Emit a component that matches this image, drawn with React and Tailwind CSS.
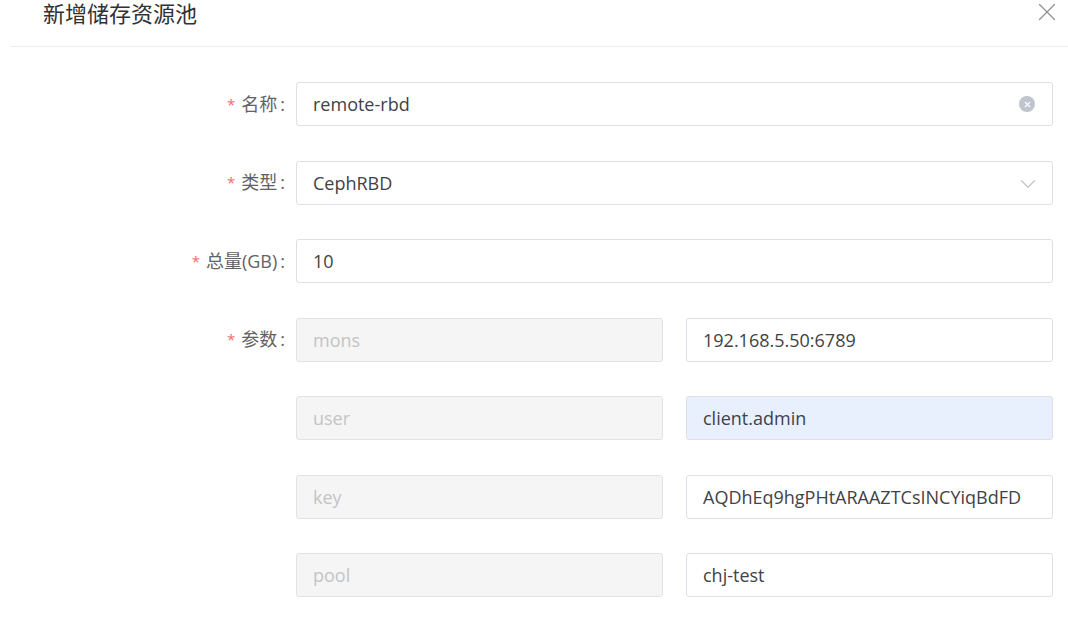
import React from 'react';
import { X, ChevronDown } from 'lucide-react';

const font = { fontFamily: '"Open Sans", "Noto Sans CJK SC", sans-serif' };

function Label({ text, required }) {
    return (
        <div className="w-[296px] shrink-0 pr-[11px] flex items-center justify-end text-[18px] text-[#606266]">
            {required && <span className="text-[#f56c6c] mr-[6px] text-[15px]">*</span>}
            <span>{text}</span>
            <span className="ml-[3px]">:</span>
        </div>
    );
}

function Field({ value, placeholder, disabled, autofill, suffix, className = '' }) {
    const tone = disabled
        ? 'bg-[#f5f5f5] border-[#e2e2e2]'
        : autofill
            ? 'bg-[#e8f0fe] border-[#dcdfe6]'
            : 'bg-white border-[#dcdfe6]';
    return (
        <div className={`relative h-[44px] border rounded-[3px] flex items-center ${tone} ${className}`}>
            <input
                readOnly
                value={value || ''}
                placeholder={placeholder}
                disabled={disabled}
                className="w-full h-full bg-transparent outline-none pl-[16px] pr-[16px] text-[18px] text-[#3f4247] placeholder:text-[#c4c4c4]"
                style={font}
            />
            {suffix}
        </div>
    );
}

const params = [
    { key: 'mons', value: '192.168.5.50:6789' },
    { key: 'user', value: 'client.admin', autofill: true },
    { key: 'key', value: 'AQDhEq9hgPHtARAAZTCsINCYiqBdFD' },
    { key: 'pool', value: 'chj-test' },
];

export default function App() {
    return (
        <div className="w-[1068px] h-[627px] bg-white overflow-hidden" style={font}>
            <div className="h-[47px] ml-[10px] border-b border-[#ebeef5] flex items-start justify-between">
                <div className="ml-[33px] mt-[1px] text-[22px] text-[#303133] leading-[24px]">新增储存资源池</div>
                <X className="-mt-[3px] mr-[6px] w-[30px] h-[30px] text-[#909399]" strokeWidth={1.1} />
            </div>

            <div className="mt-[35px] flex flex-col gap-[34.5px]">
                <div className="flex">
                    <Label text="名称" required />
                    <Field
                        value="remote-rbd"
                        className="w-[757px]"
                        suffix={
                            <span className="absolute right-[17px] top-[13px] w-[16px] h-[16px] rounded-full bg-[#c0c4cc] flex items-center justify-center">
                                <X className="w-[9px] h-[9px] text-white" strokeWidth={3} />
                            </span>
                        }
                    />
                </div>
                <div className="flex">
                    <Label text="类型" required />
                    <Field
                        value="CephRBD"
                        className="w-[757px]"
                        suffix={
                            <ChevronDown className="absolute right-[11px] top-[9px] w-[26px] h-[26px] text-[#c0c4cc]" strokeWidth={1.1} />
                        }
                    />
                </div>
                <div className="flex">
                    <Label text="总量(GB)" required />
                    <Field value="10" className="w-[757px]" />
                </div>
                {params.map((p, i) => (
                    <div key={p.key} className="flex">
                        {i === 0 ? <Label text="参数" required /> : <div className="w-[296px] shrink-0" />}
                        <div className="flex gap-[23px]">
                            <Field placeholder={p.key} disabled className="w-[367px]" />
                            <Field value={p.value} autofill={p.autofill} className="w-[367px]" />
                        </div>
                    </div>
                ))}
            </div>
        </div>
    );
}
